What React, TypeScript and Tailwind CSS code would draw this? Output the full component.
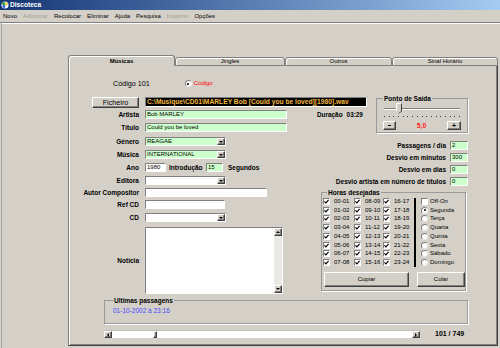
import React from "react";

const raised =
  "bg-[#d4d0c8] border border-t-white border-l-white border-b-[#404040] border-r-[#404040] shadow-[inset_-1px_-1px_0_#808080]";
const sunken = "border border-t-[#808080] border-l-[#808080] border-b-white border-r-white";

const hours = [
  ["00-01", "01-02", "02-03", "03-04", "04-05", "05-06", "06-07", "07-08"],
  ["08-09", "09-10", "10-11", "11-12", "12-13", "13-14", "14-15", "15-16"],
  ["16-17", "17-18", "18-19", "19-20", "20-21", "21-22", "22-23", "23-24"],
];
const days = ["Segunda", "Terça", "Quarta", "Quinta", "Sexta", "Sábado", "Domingo"];

function Down() {
  return <span className="w-0 h-0 border-l-[2px] border-r-[2px] border-t-[2px] border-l-transparent border-r-transparent border-t-black" />;
}

function Up() {
  return <span className="w-0 h-0 border-l-[2px] border-r-[2px] border-b-[2px] border-l-transparent border-r-transparent border-b-black" />;
}

function Label({ children }: { children: React.ReactNode }) {
  return <span className="w-[76px] pr-[6px] text-right font-bold text-[6.5px] leading-[7px] whitespace-nowrap">{children}</span>;
}

function Field({ w, green, children }: { w: string; green?: boolean; children?: React.ReactNode }) {
  return (
    <div className={`${w} h-[9px] ${sunken} ${green ? "bg-[#ccffcc]" : "bg-white"} pl-[1px] text-[6px] leading-[7px] whitespace-nowrap overflow-hidden`}>
      {children}
    </div>
  );
}

function Combo({ w, green, value }: { w: string; green?: boolean; value?: string }) {
  return (
    <div className={`${w} h-[9px] flex ${sunken} ${green ? "bg-[#ccffcc]" : "bg-white"}`}>
      <span className="flex-1 pl-[1px] text-[6px] leading-[7px] whitespace-nowrap overflow-hidden">{value}</span>
      <span className={`w-[8px] h-full flex items-center justify-center ${raised}`}>
        <Down />
      </span>
    </div>
  );
}

function Check({ on }: { on?: boolean }) {
  return (
    <span className={`w-[7px] h-[7px] shrink-0 bg-white ${sunken} flex items-center justify-center`}>
      {on && (
        <svg width="5" height="5" viewBox="0 0 5 5">
          <path d="M0.4 2.4 L1.9 3.9 L4.6 0.9" fill="none" stroke="#000" strokeWidth="1.2" />
        </svg>
      )}
    </span>
  );
}

function Radio({ on }: { on?: boolean }) {
  return (
    <span className="w-[7px] h-[7px] shrink-0 rounded-full bg-white border border-t-[#808080] border-l-[#808080] border-b-[#e8e8e8] border-r-[#e8e8e8] flex items-center justify-center">
      {on && <span className="w-[2px] h-[2px] rounded-full bg-black" />}
    </span>
  );
}

function TitleBar() {
  return (
    <div className="h-[10px] flex items-center bg-linear-to-r from-[#163575] to-[#a6caf0]">
      <svg width="8" height="8" viewBox="0 0 8 8" className="ml-[1px]">
        <circle cx="4" cy="4" r="3.6" fill="#e8f0ff" />
        <circle cx="2.6" cy="2.6" r="1.6" fill="#3aa040" />
        <circle cx="5.4" cy="2.8" r="1.4" fill="#f0d020" />
        <circle cx="3" cy="5.5" r="1.4" fill="#3060d0" />
        <circle cx="5.6" cy="5.4" r="1.2" fill="#ffffff" />
      </svg>
      <span className="ml-[1px] text-white font-bold text-[6.6px] leading-[8px]">Discoteca</span>
    </div>
  );
}

function MenuBar() {
  const items: [string, boolean][] = [
    ["Novo", true],
    ["Adicionar", false],
    ["Recolocar", true],
    ["Eliminar", true],
    ["Ajuda", true],
    ["Pesquisa", true],
    ["Imprimir", false],
    ["Opções", true],
  ];
  return (
    <div className="h-[13px] flex items-center gap-[6px] pl-[3px] border-b border-[#808080] text-[6px] leading-[8px]">
      {items.map(([t, on]) => (
        <span key={t} className={on ? "text-black" : "text-[#a09c94]"}>
          {t}
        </span>
      ))}
    </div>
  );
}

function Tabs() {
  const tab = "rounded-t-[3px] border border-[#808080] shadow-[inset_1px_1px_0_#fff] flex items-center justify-center text-[6px] leading-[7px]";
  return (
    <div className="h-[11px] flex items-end">
      <div className={`${tab} w-[107px] h-[11px] border-b-0 font-bold text-[6.3px]`}>Músicas</div>
      <div className={`${tab} w-[110px] h-[9px]`}>Jingles</div>
      <div className={`${tab} w-[107px] h-[9px]`}>Outros</div>
      <div className={`${tab} w-[106px] h-[9px]`}>Sinal Horário</div>
    </div>
  );
}

function PontoSaida() {
  return (
    <fieldset className="ml-[9px] -mt-[2px] w-[92px] border border-[#9a9a9a] shadow-[1px_1px_0_#fff] px-[6px] pb-[2px]">
      <legend className="ml-[0px] px-[1px] font-bold text-[6.5px] leading-[7px]">Ponto de Saída</legend>
      <div className="relative h-[11px] mt-[1px] mx-[1px]">
        <div className="absolute left-0 right-0 top-[5px] h-[2px] border-t border-[#808080] border-b border-b-white" />
        <svg width="6" height="11" viewBox="0 0 6 11" className="absolute left-[12px] top-0">
          <polygon points="0.5,0.5 5.5,0.5 5.5,8 3,10.5 0.5,8" fill="#d4d0c8" />
          <polyline points="0.5,8 0.5,0.5 5.5,0.5" fill="none" stroke="#fff" strokeWidth="1" />
          <polyline points="5.5,0.5 5.5,8 3,10.5" fill="none" stroke="#404040" strokeWidth="1" />
        </svg>
      </div>
      <div className="mt-[2px] mx-[1px] h-[1px] flex justify-between">
        {Array.from({ length: 17 }).map((_, i) => (
          <span key={i} className="w-[1px] h-[1px] bg-[#404040]" />
        ))}
      </div>
      <div className="mt-[4px] h-[9px] flex items-center">
        <span className={`w-[13px] h-[9px] ${raised} flex items-center justify-center`}>
          <span className="w-[3px] h-[1px] bg-black" />
        </span>
        <span className="flex-1 text-center font-bold text-[7px] leading-[8px] text-[#ff2020]">5,0</span>
        <span className={`w-[14px] h-[9px] ${raised} flex items-center justify-center text-[7px] leading-[7px] font-bold`}>+</span>
      </div>
    </fieldset>
  );
}

function Horas() {
  return (
    <fieldset className="ml-[31px] mt-[3px] w-[145px] border border-[#9a9a9a] shadow-[1px_1px_0_#fff] pl-[1px] pb-[3px]">
      <legend className="ml-[4px] px-[1px] font-bold text-[6.5px] leading-[7px]">Horas desejadas</legend>
      <div className="flex pt-[1px]">
        {hours.map((col, ci) => (
          <div key={ci} className={`flex flex-col ${ci === 0 ? "w-[31px]" : ci === 1 ? "w-[29px]" : "w-[31px]"}`}>
            {col.map((h) => (
              <div key={h} className="h-[8.75px] flex items-center">
                <Check on />
                <span className="ml-[4px] text-[6px] leading-[7px]">{h}</span>
              </div>
            ))}
          </div>
        ))}
        <div className="w-[2px] h-[69px] mt-[1px] bg-black" />
        <div className="ml-[5px] flex flex-col">
          <div className="h-[8.75px] flex items-center">
            <Check />
            <span className="ml-[2px] text-[6px] leading-[7px]">Off-On</span>
          </div>
          {days.map((d, i) => (
            <div key={d} className="h-[8.75px] flex items-center">
              <Radio on={i === 0} />
              <span className="ml-[2px] text-[6px] leading-[7px]">{d}</span>
            </div>
          ))}
        </div>
      </div>
      <div className="mt-[5px] flex">
        <div className={`ml-[1px] w-[85px] h-[15px] ${raised} flex items-center justify-center text-[6px]`}>Copiar</div>
        <div className={`ml-[8px] w-[48px] h-[15px] ${raised} flex items-center justify-center text-[6px]`}>Colar</div>
      </div>
    </fieldset>
  );
}

function RightRow({ label, value }: { label: string; value: string }) {
  return (
    <div className="h-[9px] flex items-center justify-end pr-[2px]">
      <span className="pr-[4px] font-bold text-[6.5px] leading-[7px] whitespace-nowrap">{label}</span>
      <Field w="w-[18px]" green>
        {value}
      </Field>
    </div>
  );
}

function Body() {
  return (
    <div className="h-[280px] flex flex-col border-l border-r border-b border-l-[#808080] border-r-[#404040] border-b-[#404040] shadow-[inset_1px_0_0_#fff,inset_-1px_-1px_0_#808080]">
      {/* código */}
      <div className="mt-[13px] h-[9px] flex items-center pl-[44px]">
        <span className="text-[7.2px] leading-[8px]">Código 101</span>
        <span className="ml-[35px]">
          <Radio on />
        </span>
        <span className="ml-[2px] text-[6px] leading-[7px] text-[#ff0000]">Código</span>
      </div>

      {/* ficheiro / artista / titulo + ponto de saida */}
      <div className="mt-[9px] flex items-start">
        <div className="w-[298px] flex flex-col">
          <div className="flex items-start pl-[23px]">
            <div className={`w-[47px] h-[11px] ${raised} flex items-center justify-center text-[7.2px] leading-[8px]`}>Ficheiro</div>
            <div className={`ml-[6px] w-[222px] h-[10px] bg-black ${sunken} pl-[1px] font-bold text-[6.7px] leading-[8px] text-[#f0b840] whitespace-nowrap overflow-hidden`}>
              C:\Musique\CD01\MARLEY Bob [Could you be loved][1980].wav
            </div>
          </div>
          <div className="mt-[2px] h-[9px] flex items-center">
            <Label>Artista</Label>
            <Field w="w-[142px]" green>
              Bob MARLEY
            </Field>
            <span className="ml-[30px] font-bold text-[6.4px] leading-[7px]">Duração</span>
            <span className="ml-[4px] font-bold text-[6.4px] leading-[7px]">03:29</span>
          </div>
          <div className="mt-[4px] h-[9px] flex items-center">
            <Label>Título</Label>
            <Field w="w-[142px]" green>
              Could you be loved
            </Field>
          </div>
        </div>
        <PontoSaida />
      </div>

      {/* main block */}
      <div className="mt-[4px] flex items-start">
        <div className="w-[221px] flex flex-col">
          <div className="h-[9px] flex items-center">
            <Label>Género</Label>
            <Combo w="w-[81px]" green value="REAGAE" />
          </div>
          <div className="mt-[4px] h-[9px] flex items-center">
            <Label>Música</Label>
            <Combo w="w-[81px]" green value="INTERNATIONAL" />
          </div>
          <div className="mt-[4px] h-[9px] flex items-center">
            <Label>Ano</Label>
            <Field w="w-[21px]">1980</Field>
            <span className="ml-[3px] w-[37px] font-bold text-[6.5px] leading-[7px]">Introdução</span>
            <Field w="w-[17px]" green>
              15
            </Field>
            <span className="ml-[5px] font-bold text-[6.5px] leading-[7px]">Segundos</span>
          </div>
          <div className="mt-[4px] h-[9px] flex items-center">
            <Label>Editora</Label>
            <Combo w="w-[81px]" />
          </div>
          <div className="mt-[3px] h-[9px] flex items-center">
            <Label>Autor Compositor</Label>
            <Field w="w-[122px]" />
          </div>
          <div className="mt-[3px] h-[9px] flex items-center">
            <Label>Ref CD</Label>
            <Field w="w-[80px]" />
          </div>
          <div className="mt-[4px] h-[9px] flex items-center">
            <Label>CD</Label>
            <Combo w="w-[81px]" />
          </div>
          <div className="mt-[5px] flex items-center">
            <Label>Notícia</Label>
            <div className={`w-[138px] h-[67px] bg-white ${sunken} flex justify-end`}>
              <div className="w-[8px] h-full flex flex-col">
                <span className={`h-[8px] ${raised} flex items-center justify-center`}>
                  <Up />
                </span>
                <span className="flex-1 bg-[#ebe9e4]" />
                <span className={`h-[8px] ${raised} flex items-center justify-center`}>
                  <Down />
                </span>
              </div>
            </div>
          </div>
        </div>

        <div className="w-[180px] mt-[4px] flex flex-col">
          <RightRow label="Passagens / dia" value="2" />
          <div className="mt-[3px]">
            <RightRow label="Desvio em minutos" value="300" />
          </div>
          <div className="mt-[3px]">
            <RightRow label="Desvio em dias" value="0" />
          </div>
          <div className="mt-[3px]">
            <RightRow label="Desvio artista em número de títulos" value="0" />
          </div>
          <Horas />
        </div>
      </div>

      {/* ultimas passagens */}
      <fieldset className="mt-[3px] ml-[35px] w-[364px] border border-[#9a9a9a] shadow-[1px_1px_0_#fff] pt-[3px] pb-[9px]">
        <legend className="ml-[8px] px-[1px] font-bold text-[6.5px] leading-[7px]">Ultimas passagens</legend>
        <div className="pl-[8px] text-[6.5px] leading-[7px] text-[#4848ff]">01-10-2002 à 23:16</div>
      </fieldset>

      {/* navegação */}
      <div className="mt-[6px] h-[8px] flex items-center pl-[35px]">
        <div className="w-[316px] h-[8px] flex bg-white border-t border-[#c0c0c0]">
          <span className={`w-[8px] h-full ${raised} flex items-center justify-center`}>
            <span className="w-0 h-0 border-t-[2px] border-b-[2px] border-r-[2px] border-t-transparent border-b-transparent border-r-black" />
          </span>
          <span className="w-[41px]" />
          <span className={`w-[4px] h-full ${raised}`} />
          <span className="flex-1" />
          <span className={`w-[8px] h-full ${raised} flex items-center justify-center`}>
            <span className="w-0 h-0 border-t-[2px] border-b-[2px] border-l-[2px] border-t-transparent border-b-transparent border-l-black" />
          </span>
        </div>
        <span className="ml-[15px] font-bold text-[7px] leading-[8px]">101 / 749</span>
      </div>
    </div>
  );
}

export default function App() {
  return (
    <div className="w-[500px] h-[348px] overflow-hidden bg-[#d4d0c8] flex flex-col font-['Liberation_Sans',Arial,sans-serif] text-black">
      <TitleBar />
      <MenuBar />
      <div className="flex-1 ml-[1px] border-l border-t border-l-[#a8a8a8] border-t-white pt-[31px] pl-[66px]">
        <div className="w-[430px] flex flex-col">
          <Tabs />
          <Body />
        </div>
      </div>
    </div>
  );
}
